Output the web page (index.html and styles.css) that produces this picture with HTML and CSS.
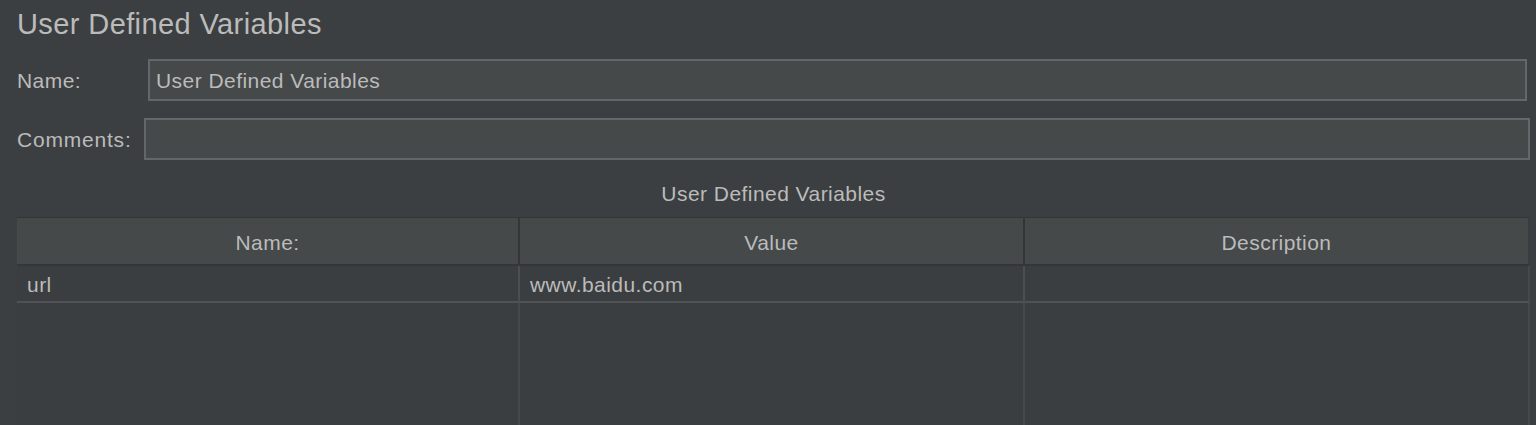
FILE: index.html
```html
<!DOCTYPE html>
<html lang="en">
<head>
<meta charset="utf-8">
<title>User Defined Variables</title>
<link rel="stylesheet" href="styles.css">
</head>
<body>
<div class="panel">
  <h1 class="title">User Defined Variables</h1>
  <div class="form-row row-name">
    <label class="label label-name">Name:</label>
    <div class="field field-name">User Defined Variables</div>
  </div>
  <div class="form-row row-comments">
    <label class="label label-comments">Comments:</label>
    <div class="field field-comments"></div>
  </div>
  <div class="caption">User Defined Variables</div>
  <div class="table">
    <div class="th">Name:</div>
    <div class="th">Value</div>
    <div class="th th-last">Description</div>
    <div class="td">url</div>
    <div class="td">www.baidu.com</div>
    <div class="td td-last"></div>
    <div class="filler"></div>
    <div class="filler"></div>
    <div class="filler filler-last"></div>
  </div>
</div>
</body>
</html>
```

FILE: styles.css
```css
html, body {
  margin: 0;
  padding: 0;
  background: #3c3f41;
  overflow: hidden;
}

body {
  font-family: "Liberation Sans", Arial, sans-serif;
  color: #bbbbbb;
  font-size: 21px;
  letter-spacing: 0.45px;
}

.panel {
  padding: 6px 6px 0 17px;
  display: flex;
  flex-direction: column;
}

.title {
  margin: 0;
  font-weight: normal;
  font-size: 29px;
  line-height: 36px;
  height: 36px;
  letter-spacing: 0.4px;
  color: #bbbbbb;
}

.form-row {
  display: flex;
  align-items: center;
  height: 42px;
}

.row-name {
  margin-top: 17px;
  margin-right: 3px;
}

.row-comments {
  margin-top: 17px;
}

.label {
  line-height: 24px;
  padding-top: 2px;
}

.label-name {
  width: 131px;
}

.label-comments {
  width: 127px;
  letter-spacing: 0.8px;
}

.field {
  flex: 1;
  box-sizing: border-box;
  height: 42px;
  background: #45494a;
  border: 2px solid #646769;
  padding: 2px 6px 0 6px;
  line-height: 36px;
  color: #bbbbbb;
}

.caption {
  margin-top: 22px;
  text-align: center;
  line-height: 24px;
  height: 24px;
}

.table {
  margin-top: 11px;
  display: grid;
  grid-template-columns: 503px 505px 505px;
  grid-template-rows: 48px 37px 140px;
  border-top: 1px solid #323436;
}

.th {
  background: #45494a;
  border-right: 2px solid #343638;
  border-bottom: 2px solid #343638;
  display: flex;
  align-items: center;
  justify-content: center;
  padding-top: 4px;
  box-sizing: border-box;
}

.th-last {
  border-right: 2px solid #3a3d3f;
}

.td {
  border-right: 2px solid #4b4f51;
  border-bottom: 2px solid #4f5355;
  box-sizing: border-box;
  padding: 2px 0 0 10px;
  display: flex;
  align-items: center;
  background: #3b3e40;
}

.td-last,
.filler-last {
  border-right: 2px solid #45494b;
}

.filler {
  border-right: 2px solid #45494b;
  background: #3b3e40;
}
```
